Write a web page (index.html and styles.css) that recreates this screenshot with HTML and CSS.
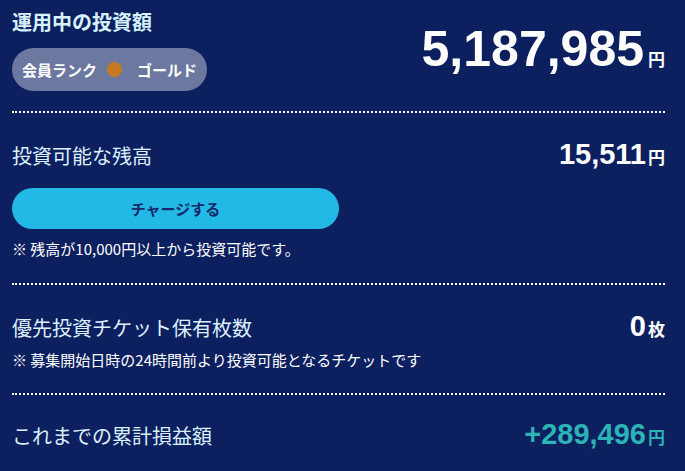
FILE: index.html
```html
<!DOCTYPE html>
<html lang="ja">
<head>
<meta charset="utf-8">
<link rel="stylesheet" href="styles.css">
</head>
<body>
<section class="sec sec-top">
  <div class="top-left">
    <h1 class="title">運用中の投資額</h1>
    <div class="badge">
      <span class="badge-label">会員ランク</span>
      <span class="badge-dot"></span>
      <span class="badge-rank">ゴールド</span>
    </div>
  </div>
  <div class="big-amount">5,187,985<span class="unit-big">円</span></div>
</section>
<section class="sec sec-balance">
  <div class="row">
    <span class="label">投資可能な残高</span>
    <span class="amount">15,511<span class="unit">円</span></span>
  </div>
  <button class="charge">チャージする</button>
  <p class="note note-balance">※ 残高が10,000円以上から投資可能です。</p>
</section>
<section class="sec sec-ticket">
  <div class="row">
    <span class="label">優先投資チケット保有枚数</span>
    <span class="amount">0<span class="unit">枚</span></span>
  </div>
  <p class="note note-ticket">※ 募集開始日時の24時間前より投資可能となるチケットです</p>
</section>
<section class="sec sec-profit">
  <div class="row">
    <span class="label">これまでの累計損益額</span>
    <span class="amount profit">+289,496<span class="unit">円</span></span>
  </div>
</section>
</body>
</html>
```
FILE: styles.css
```css
html, body {
  margin: 0;
  background: #0c1f5f;
}
body {
  padding: 0 20px 0 12px;
  font-family: "Noto Sans CJK JP", "Noto Sans", sans-serif;
  color: #ffffff;
}
.sec {
  border-top: 2px dotted #ffffff;
  padding-top: 26px;
}
.sec-top {
  border-top: none;
  padding: 7px 0 20px;
  display: flex;
  justify-content: space-between;
  align-items: flex-start;
}
.title {
  margin: 0;
  font-size: 20px;
  line-height: 30px;
  font-weight: 700;
  color: #d6f1ff;
}
.badge {
  margin-top: 11px;
  display: inline-flex;
  align-items: center;
  height: 43px;
  padding: 0 10px;
  border-radius: 22px;
  background: #6c78a0;
  font-size: 15px;
  font-weight: 700;
  color: #ffffff;
}
.badge-dot {
  width: 15px;
  height: 15px;
  border-radius: 50%;
  background: #c47a22;
  margin: 0 15px 0 10px;
}
.big-amount {
  margin-top: 17px;
  font-family: "Liberation Sans", Arial, sans-serif;
  font-weight: 700;
  font-size: 50px;
  line-height: 50px;
  color: #ffffff;
}
.unit-big {
  font-family: "Noto Sans CJK JP", sans-serif;
  font-size: 17px;
  font-weight: 700;
  margin-left: 4px;
}
.row {
  display: flex;
  justify-content: space-between;
  align-items: center;
}
.label {
  font-size: 20px;
  line-height: 30px;
  color: #dcefff;
}
.amount {
  font-family: "Liberation Sans", Arial, sans-serif;
  font-weight: 700;
  font-size: 29px;
  line-height: 30px;
  color: #ffffff;
}
.unit {
  font-family: "Noto Sans CJK JP", sans-serif;
  font-size: 17px;
  font-weight: 700;
  margin-left: 2px;
}
.profit {
  color: #2cb3b5;
}
.charge {
  display: block;
  margin-top: 16px;
  width: 327px;
  height: 41px;
  border: none;
  border-radius: 21px;
  background: #22b9e6;
  color: #14286a;
  font-family: "Noto Sans CJK JP", sans-serif;
  font-size: 15px;
  font-weight: 700;
  cursor: pointer;
}
.note {
  margin: 0;
  font-size: 15px;
  line-height: 22px;
  color: #ffffff;
}
.note-balance {
  margin-top: 9px;
  padding-bottom: 23px;
}
.note-ticket {
  margin-top: 5px;
  padding-bottom: 22px;
}
.sec-profit {
  padding-top: 24px;
  padding-bottom: 20px;
}
```
